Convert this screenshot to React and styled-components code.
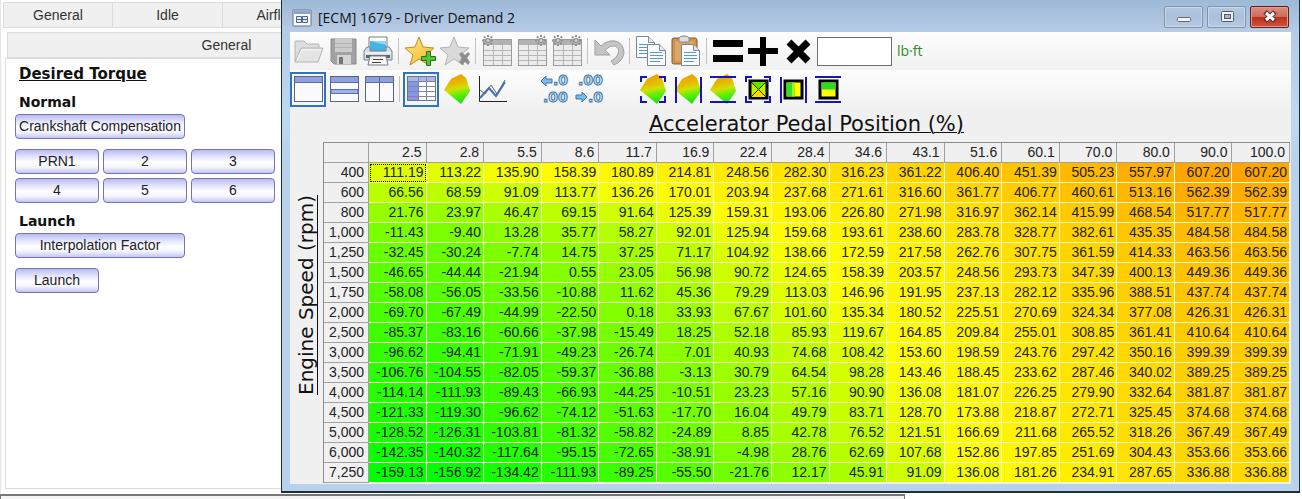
import styled, { createGlobalStyle } from 'styled-components'

const GlobalStyle = createGlobalStyle`
  * {
    box-sizing: border-box;
  }
  body {
    margin: 0;
    background: #ffffff;
    font-family: 'Liberation Sans', Arial, sans-serif;
    font-size: 14px;
    color: #222222;
    overflow: hidden;
  }
`

const pedal = ['2.5', '2.8', '5.5', '8.6', '11.7', '16.9', '22.4', '28.4', '34.6', '43.1', '51.6', '60.1', '70.0', '80.0', '90.0', '100.0']

const rows = [
  ['400', '111.19 113.22 135.90 158.39 180.89 214.81 248.56 282.30 316.23 361.22 406.40 451.39 505.23 557.97 607.20 607.20'],
  ['600', '66.56 68.59 91.09 113.77 136.26 170.01 203.94 237.68 271.61 316.60 361.77 406.77 460.61 513.16 562.39 562.39'],
  ['800', '21.76 23.97 46.47 69.15 91.64 125.39 159.31 193.06 226.80 271.98 316.97 362.14 415.99 468.54 517.77 517.77'],
  ['1,000', '-11.43 -9.40 13.28 35.77 58.27 92.01 125.94 159.68 193.61 238.60 283.78 328.77 382.61 435.35 484.58 484.58'],
  ['1,250', '-32.45 -30.24 -7.74 14.75 37.25 71.17 104.92 138.66 172.59 217.58 262.76 307.75 361.59 414.33 463.56 463.56'],
  ['1,500', '-46.65 -44.44 -21.94 0.55 23.05 56.98 90.72 124.65 158.39 203.57 248.56 293.73 347.39 400.13 449.36 449.36'],
  ['1,750', '-58.08 -56.05 -33.56 -10.88 11.62 45.36 79.29 113.03 146.96 191.95 237.13 282.12 335.96 388.51 437.74 437.74'],
  ['2,000', '-69.70 -67.49 -44.99 -22.50 0.18 33.93 67.67 101.60 135.34 180.52 225.51 270.69 324.34 377.08 426.31 426.31'],
  ['2,500', '-85.37 -83.16 -60.66 -37.98 -15.49 18.25 52.18 85.93 119.67 164.85 209.84 255.01 308.85 361.41 410.64 410.64'],
  ['3,000', '-96.62 -94.41 -71.91 -49.23 -26.74 7.01 40.93 74.68 108.42 153.60 198.59 243.76 297.42 350.16 399.39 399.39'],
  ['3,500', '-106.76 -104.55 -82.05 -59.37 -36.88 -3.13 30.79 64.54 98.28 143.46 188.45 233.62 287.46 340.02 389.25 389.25'],
  ['4,000', '-114.14 -111.93 -89.43 -66.93 -44.25 -10.51 23.23 57.16 90.90 136.08 181.07 226.25 279.90 332.64 381.87 381.87'],
  ['4,500', '-121.33 -119.30 -96.62 -74.12 -51.63 -17.70 16.04 49.79 83.71 128.70 173.88 218.87 272.71 325.45 374.68 374.68'],
  ['5,000', '-128.52 -126.31 -103.81 -81.32 -58.82 -24.89 8.85 42.78 76.52 121.51 166.69 211.68 265.52 318.26 367.49 367.49'],
  ['6,000', '-142.35 -140.32 -117.64 -95.15 -72.65 -38.91 -4.98 28.76 62.69 107.68 152.86 197.85 251.69 304.43 353.66 353.66'],
  ['7,250', '-159.13 -156.92 -134.42 -111.93 -89.25 -55.50 -21.76 12.17 45.91 91.09 136.08 181.26 234.91 287.65 336.88 336.88'],
].map(([rpm, values]) => ({ rpm, values: values.split(' ') }))

const MIN = -159.13
const MID = 150
const MAX = 607.2

// green -> yellow -> orange
function heat(value) {
  const v = Number(value)
  if (v < MID) {
    return `rgb(${Math.round((255 * (v - MIN)) / (MID - MIN))}, 255, 0)`
  }
  return `rgb(255, ${Math.round(255 - (90 * (v - MID)) / (MAX - MID))}, 0)`
}

/* ---------- layout ---------- */

const Screen = styled.div`
  display: flex;
  flex-direction: column;
`

const Workspace = styled.div`
  display: flex;
  align-items: stretch;
`

const Sidebar = styled.aside`
  display: flex;
  flex-direction: column;
  flex: 0 0 281px;
  min-width: 0;
  overflow: hidden;
  padding: 2px 0 4px 2px;
  border-left: 1px solid #e4e4e4;
  background: #fdfdfd;
`

const TabRow = styled.div`
  display: flex;
  padding-left: ${(p) => p.$indent || 0}px;
  margin-bottom: ${(p) => p.$gap || 0}px;
`

const Tab = styled.button`
  flex: 0 0 ${(p) => p.$width}px;
  height: 26px;
  padding: 0;
  border: 1px solid #dcdcdc;
  border-right-width: 0;
  background: #f0f0f0;
  font: inherit;
  color: #333333;
`

const TabPage = styled.div`
  display: flex;
  flex-direction: column;
  flex: 1;
  gap: 8px;
  margin-left: 2px;
  padding: 5px 6px 0 9px;
  border: 1px solid #dcdcdc;
  border-right: 0;
  background: #ffffff;
`

const PanelTitle = styled.h2`
  margin: 0 0 0 4px;
  font: bold 15px/20px 'DejaVu Sans', sans-serif;
  text-decoration: underline;
  color: #111111;
`

const Section = styled.section`
  display: flex;
  flex-direction: column;
  align-items: flex-start;
  gap: 10px;
`

const SectionTitle = styled.h3`
  margin: 0 0 -8px 4px;
  font: bold 14px/20px 'DejaVu Sans', sans-serif;
  color: #111111;
`

const ButtonGrid = styled.div`
  display: grid;
  grid-template-columns: repeat(3, 84px);
  gap: 4px;
`

const PushButton = styled.button`
  width: ${(p) => (p.$wide ? 170 : 84)}px;
  height: 25px;
  padding: 0;
  border: 1px solid #7476ac;
  border-radius: 4px;
  background: linear-gradient(#b9bbf2 0%, #e4e5fc 30%, #ffffff 55%, #f4f4ff 75%, #c3c5f4 100%);
  font: inherit;
  line-height: 23px;
  white-space: nowrap;
  color: #222222;
`

const Window = styled.main`
  display: flex;
  flex-direction: column;
  flex: 1;
  min-width: 0;
  margin-right: 2px;
  padding: 0 8px 7px;
  border: solid #1f2f38;
  border-width: 0 1px 2px 1px;
  background: linear-gradient(#9db9d6 0, #b6cbe6 32px, #bdd9f2 120px, #b9d1ea 160px);
`

const TitleBar = styled.header`
  display: flex;
  align-items: center;
  gap: 6px;
  height: 32px;
  padding: 4px 2px 0;
`

const WindowTitle = styled.h1`
  flex: 1;
  margin: 0;
  font: 14px/24px 'Open Sans', 'Noto Sans', sans-serif;
  color: #111111;
`

const WindowControls = styled.div`
  display: flex;
  gap: 4px;
  margin-bottom: 2px;
`

const ControlButton = styled.button`
  display: flex;
  align-items: center;
  justify-content: center;
  width: 39px;
  height: 22px;
  padding: 0;
  border: 1px solid ${(p) => (p.$danger ? '#5b1f1f' : '#7f93ad')};
  border-radius: 2px;
  box-shadow: inset 0 0 0 1px ${(p) => (p.$danger ? '#e59a8d' : '#c8d8ea')};
  background: ${(p) =>
    p.$danger ? 'linear-gradient(#dd8e81 0%, #cf6a5c 48%, #bd2f1c 52%, #d0543c 100%)' : 'linear-gradient(#b4c8df, #a9bfda 50%, #b7cbe4)'};
`

const Client = styled.div`
  display: flex;
  flex-direction: column;
  background: #f0f0f0;
`

const Toolbar = styled.div`
  display: flex;
  align-items: center;
  height: 38px;
  background: linear-gradient(#fdfdfd, #f1f1f1);
`

const ToolButton = styled.button`
  display: flex;
  align-items: center;
  justify-content: center;
  flex: 0 0 35px;
  height: 35px;
  padding: 0;
  border: ${(p) => (p.$active ? '2px solid #2f74b8' : '0')};
  background: ${(p) => (p.$active ? '#f3f7fb' : 'transparent')};

  svg {
    flex: none;
  }
`

const Divider = styled.span`
  flex: 0 0 1px;
  height: 26px;
  margin: 0 3px;
  background: #c3c3c3;
`

const Spacer = styled.span`
  flex: 0 0 28px;
`

const ValueInput = styled.input`
  width: 75px;
  height: 29px;
  margin-left: 2px;
  padding: 0 4px;
  border: 1px solid #6e6e6e;
  border-radius: 0;
  background: #ffffff;
  font: inherit;
`

const Unit = styled.label`
  margin-left: 5px;
  font: 14px/20px 'Open Sans', 'Noto Sans', sans-serif;
  color: #2c8a2c;
`

const Sheet = styled.div`
  display: grid;
  grid-template-columns: 33px minmax(0, 1fr);
  grid-template-rows: 34px auto;
  padding: 0 1px 1px 0;
`

const XLabel = styled.h2`
  margin: 0;
  font: 21px/32px 'DejaVu Sans', sans-serif;
  text-align: center;
  text-decoration: underline;
  text-decoration-thickness: 1px;
  color: #111111;
`

const YLabel = styled.h2`
  grid-row: 1 / 3;
  margin: 0;
  writing-mode: vertical-rl;
  transform: rotate(180deg);
  font: 20px/33px 'DejaVu Sans', sans-serif;
  text-align: center;
  text-decoration: underline;
  text-decoration-thickness: 1px;
  color: #111111;
`

const DataTable = styled.table`
  grid-column: 2;
  width: 100%;
  table-layout: fixed;
  border-spacing: 0;
  border-top: 1px solid #8c8c8c;
  border-left: 1px solid #8c8c8c;
  line-height: 19px;
  text-align: right;
`

const HeadCell = styled.th`
  width: ${(p) => (p.$corner ? '45px' : 'auto')};
  height: 20px;
  padding: 0 4px 0 0;
  border: solid #a0a0a0;
  border-width: 0 1px 1px 0;
  background: #f0f0f0;
  font-weight: normal;
  text-align: right;
`

const Cell = styled.td`
  height: 20px;
  padding: 0 2px 0 0;
  border: solid #f6f6d8;
  border-width: 0 1px 1px 0;
  background-clip: padding-box;
  outline: ${(p) => (p.$selected ? '1px dotted #000000' : 'none')};
  outline-offset: -2px;
`

const StatusStrip = styled.footer`
  width: 905px;
  height: 5px;
  margin-top: 1px;
  border: solid #777777;
  border-width: 2px 1px 0 1px;
  background: #f4f4f4;
`

/* ---------- icons ---------- */

const Svg = ({ children, size = 32 }) => (
  <svg width={size} height={size} viewBox={`0 0 ${size} ${size}`} fill="none" aria-hidden="true">
    {children}
  </svg>
)

const AppIcon = () => (
  <Svg size={20}>
    <rect x="1" y="2" width="18" height="16" rx="1" fill="#f8f8f8" stroke="#69727e" />
    <rect x="2" y="3" width="16" height="3" fill="#7fa6dc" />
    <path d="M4.5 8.500h5v3h-5zM10.500 8.500h5v3h-5zM4.500 11.500h5v3h-5zM10.500 11.500h5v3h-5z" fill="#dfe8f3" stroke="#50647e" />
  </Svg>
)

const OpenIcon = () => (
  <Svg>
    <path d="M3 27V7q0-1 1-1h8l3 3h11q1 0 1 1v4" fill="#dedede" stroke="#b4b4b4" />
    <path d="M3 27 9 13h22l-5 14z" fill="#e4e4e4" stroke="#b4b4b4" />
    <path d="m5 25 5-10h19" stroke="#f8f8f8" />
  </Svg>
)

const SaveIcon = () => (
  <Svg>
    <path d="M4 4h25v25H7l-3-3z" fill="#a2a2a2" stroke="#8a8a8a" />
    <rect x="8" y="4" width="17" height="13" fill="#cbcbcb" />
    <path d="M8 8.500h17M8 12.500h17" stroke="#b2b2b2" />
    <rect x="10" y="20" width="14" height="9" fill="#d5d5d5" />
    <rect x="12" y="22" width="4" height="7" fill="#777777" />
  </Svg>
)

const PrintIcon = () => (
  <Svg>
    <path d="M7 2h18v13H7z" fill="#ffffff" stroke="#7c7c7c" />
    <path d="M8 6h16v10H8z" fill="#45b3e6" />
    <path d="M8 6h16v4z" fill="#8fd6f5" />
    <path d="M5 12h3v4h16v-4h3l3 4v9H2v-9z" fill="#d9dde2" stroke="#77808a" />
    <path d="M3 18h26" stroke="#ffffff" />
    <rect x="4" y="20" width="24" height="3" fill="#566575" />
    <path d="M8 21h16l2 9H6z" fill="#f8f8f8" stroke="#7c7c7c" />
    <path d="M11 24.500h10M10 27.500h9" stroke="#444444" />
  </Svg>
)

const Star = ({ fill, stroke }) => (
  <path d="m15 2 4 10 11 1-8.500 7 3 10L15 24l-9 6 3-10L1 13l10-1z" fill={fill} stroke={stroke} strokeLinejoin="round" />
)

const StarAddIcon = () => (
  <Svg>
    <defs>
      <linearGradient id="gold" x1="0" y1="0" x2="1" y2="1">
        <stop offset="0" stopColor="#ffe98a" />
        <stop offset="1" stopColor="#f7b423" />
      </linearGradient>
    </defs>
    <Star fill="url(#gold)" stroke="#c48b20" />
    <path d="M22.500 16.500h4v5h5v4h-5v5h-4v-5h-5v-4h5z" fill="#55c436" stroke="#23721b" />
  </Svg>
)

const StarRemoveIcon = () => (
  <Svg>
    <Star fill="#d9d9d9" stroke="#b4b4b4" />
    <path d="m20 19 3-2 3 3 3-3 2 2-3 4 3 4-2 3-3-3-3 3-3-3 3-4z" fill="#8e8e8e" />
  </Svg>
)

const Burst = ({ x }) => (
  <g stroke="#8f8f8f" strokeWidth="2">
    <path d={`M${x} 0v11M${x - 6} 5.500h12M${x - 4} 1.500l8 8M${x + 4} 1.500l-8 8`} strokeDasharray="2 1" />
    <circle cx={x} cy="5.500" r="2" fill="#d0d0d0" strokeWidth="1" />
  </g>
)

const GridBurstIcon = ({ bursts }) => (
  <Svg>
    <rect x="2.500" y="4.500" width="28" height="26" fill="#ececec" stroke="#9c9c9c" />
    <rect x="3" y="5" width="27" height="5" fill="#b2b2b2" />
    <path d="M3 15.500h27M3 20.500h27M3 25.500h27M12.500 10v20M21.500 10v20" stroke="#b6b6b6" />
    {bursts.map((x) => (
      <Burst key={x} x={x} />
    ))}
  </Svg>
)

const UndoIcon = () => (
  <Svg>
    <path
      d="M2 5v15h15l-5-5q5-5 10-4 5 2 3 8-2 5-7 7l3 4q9-4 10-12 0-10-9-12-8-1-14 5z"
      fill="#c5c5c5"
      stroke="#a0a0a0"
      strokeLinejoin="round"
    />
  </Svg>
)

const PaperShape = ({ x, y }) => (
  <g transform={`translate(${x} ${y})`}>
    <path d="M.5.500h12l6 6v15H.5z" fill="#fafcff" stroke="#7a8796" />
    <path d="M12.500.500v6h6" fill="#e3e9f0" stroke="#7a8796" />
    <path d="M3 8.500h12M3 11.500h13M3 14.500h13M3 17.500h10" stroke="#5796d8" />
  </g>
)

const CopyIcon = () => (
  <Svg>
    <PaperShape x={1} y={1} />
    <PaperShape x={12} y={9} />
  </Svg>
)

const PasteIcon = () => (
  <Svg>
    <rect x="2" y="3" width="25" height="26" rx="2" fill="#cf9350" stroke="#8a5a26" />
    <rect x="5" y="6" width="19" height="20" fill="#dca867" />
    <path d="M9 3q0-2 5-2t5 2v4H9z" fill="#dedede" stroke="#868686" />
    <PaperShape x={11} y={9} />
  </Svg>
)

const EqualsIcon = () => (
  <Svg>
    <path d="M1 5h30v7H1zM1 20h30v7H1z" fill="#000000" />
  </Svg>
)

const PlusIcon = () => (
  <Svg>
    <path d="M13 2h6v11h12v6H19v12h-6V19H1v-6h12z" fill="#000000" />
  </Svg>
)

const TimesIcon = () => (
  <Svg>
    <path d="m7 7 19 19M26 7 7 26" stroke="#000000" strokeWidth="7" />
  </Svg>
)

const LayoutIcon = ({ split }) => (
  <Svg>
    <rect x="2.500" y="3.500" width="28" height="25" fill="#fbfbfd" stroke="#5a6580" />
    <path d="M3 4h27v5H3z" fill="#8f9fe0" />
    <path d="M3 9.500h27" stroke="#5a6fae" />
    {split === 'rows' && <path d="M3 16.500h27v4H3z" fill="#9fb0ea" stroke="#5a6fae" />}
    {split === 'columns' && <path d="M16.500 4v24" stroke="#5a6580" />}
  </Svg>
)

const TableIcon = () => (
  <Svg>
    <rect x="2.500" y="3.500" width="28" height="24" fill="#ffffff" stroke="#68738c" />
    <path d="M3 4h27v4H3z" fill="#a9b5ee" />
    <path d="M3 8h10v19H3z" fill="#8795e2" />
    <path d="M3 8.500h27M3 13.500h27M3 18.500h27M3 23.500h27M13.500 4v24M21.500 4v24" stroke="#7d86a6" />
  </Svg>
)

const SurfaceDefs = () => (
  <defs>
    <linearGradient id="surface" x1=".4" y1="0" x2=".6" y2="1">
      <stop offset="0" stopColor="#ec9a00" />
      <stop offset=".3" stopColor="#e8b800" />
      <stop offset=".5" stopColor="#cfe000" />
      <stop offset=".7" stopColor="#5cf000" />
      <stop offset="1" stopColor="#1fdc1f" />
    </linearGradient>
  </defs>
)

const SURFACE = 'M3 17 10 6 20 1l5 4 4 13-9 13z'

const SurfaceIcon = () => (
  <Svg>
    <SurfaceDefs />
    <path d={SURFACE} fill="url(#surface)" />
  </Svg>
)

const ChartIcon = () => (
  <Svg>
    <path d="M3.500 3v25.500H31" stroke="#222222" />
    <path d="m4 25 9-10 7 8 9-14" stroke="#3c74bd" strokeWidth="2" />
    <path d="m4 17 5 4 6-9 6 9 8-14" stroke="#5b6572" />
  </Svg>
)

const decimalText = {
  fill: '#c6e2f6',
  stroke: '#3d78a8',
  strokeWidth: 1,
  fontFamily: "'DejaVu Sans', sans-serif",
  fontWeight: 'bold',
  fontSize: 14,
}

const DecimalIcon = ({ more }) => (
  <Svg>
    {more ? (
      <>
        <path d="m2 8 5-5v3h6v4H7v3z" fill="#7cbbe8" stroke="#3d78a8" />
        <text x="14" y="12" {...decimalText}>.0</text>
        <text x="4" y="29" {...decimalText}>.00</text>
      </>
    ) : (
      <>
        <text x="4" y="12" {...decimalText}>.00</text>
        <path d="m13 24-5-5v3H2v4h6v3z" fill="#7cbbe8" stroke="#3d78a8" />
        <text x="14" y="29" {...decimalText}>.0</text>
      </>
    )}
  </Svg>
)

const brackets = {
  corners: 'M4 9V4h6M22 4h6v5M28 23v6h-6M10 29H4v-6',
  sides: 'M4 4v26M29 4v26',
  bars: 'M3 4h26M3 29h26',
}

const RangeIcon = ({ bracket, kind }) => (
  <Svg>
    {kind === 'surface' && <path d={SURFACE} fill="url(#surface)" />}
    {kind === 'cross' && (
      <>
        <rect x="8" y="8" width="17" height="17" fill="#c5f000" stroke="#000000" strokeWidth="3" />
        <path d="M9 9h15L16.500 16.500z" fill="#62e600" />
        <path d="M9 24h15L16.500 16.500z" fill="#ffd800" />
        <path d="m9 9 15 15M24 9 9 24" stroke="#222222" />
      </>
    )}
    {kind === 'across' && (
      <>
        <rect x="8" y="8" width="17" height="17" fill="#ffff00" stroke="#000000" strokeWidth="3" />
        <path d="M9.500 9.500h6v14h-6z" fill="#35e02a" />
        <path d="M15 9.500h3v14h-3z" fill="#a8f010" />
      </>
    )}
    {kind === 'down' && (
      <>
        <rect x="8" y="8" width="17" height="17" fill="#ffff00" stroke="#000000" strokeWidth="3" />
        <path d="M9.500 9.500h14v7h-14z" fill="#2bd92b" />
      </>
    )}
    <path d={brackets[bracket]} stroke="#1515bb" strokeWidth="2" />
  </Svg>
)

const MinimizeIcon = () => (
  <Svg size={16}>
    <rect x="1.500" y="8.500" width="13" height="4" rx="1" fill="#f4f4f4" stroke="#5b6877" />
  </Svg>
)

const MaximizeIcon = () => (
  <Svg size={16}>
    <rect x="2.500" y="2.500" width="12" height="10" rx="1" fill="#f4f4f4" stroke="#4d5b6c" />
    <rect x="5.500" y="5.500" width="6" height="4" fill="#9fb6d2" stroke="#4d5b6c" />
  </Svg>
)

const CloseIcon = () => (
  <Svg size={16}>
    <path d="m3 3 10 9M13 3 3 12" stroke="#5d3038" strokeWidth="5" />
    <path d="m4 4 8 7M12 4l-8 7" stroke="#ffffff" strokeWidth="3" />
  </Svg>
)

/* ---------- page ---------- */

const Tool = ({ label, active, children }) => (
  <ToolButton type="button" aria-label={label} $active={active}>
    {children}
  </ToolButton>
)

function TorquePanel() {
  return (
    <Sidebar>
      <TabRow $gap={4}>
        <Tab $width={109}>General</Tab>
        <Tab $width={110}>Idle</Tab>
        <Tab $width={110}>Airflow</Tab>
      </TabRow>
      <TabRow $indent={4}>
        <Tab $width={438}>General</Tab>
      </TabRow>
      <TabPage>
        <PanelTitle>Desired Torque</PanelTitle>
        <Section>
          <SectionTitle>Normal</SectionTitle>
          <PushButton $wide>Crankshaft Compensation</PushButton>
          <ButtonGrid>
            {['PRN1', '2', '3', '4', '5', '6'].map((name) => (
              <PushButton key={name}>{name}</PushButton>
            ))}
          </ButtonGrid>
        </Section>
        <Section>
          <SectionTitle>Launch</SectionTitle>
          <PushButton $wide>Interpolation Factor</PushButton>
          <PushButton>Launch</PushButton>
        </Section>
      </TabPage>
    </Sidebar>
  )
}

function EditToolbar() {
  return (
    <Toolbar>
      <Tool label="Open"><OpenIcon /></Tool>
      <Tool label="Save"><SaveIcon /></Tool>
      <Tool label="Print"><PrintIcon /></Tool>
      <Divider />
      <Tool label="Add favorite"><StarAddIcon /></Tool>
      <Tool label="Remove favorite"><StarRemoveIcon /></Tool>
      <Divider />
      <Tool label="Column labels"><GridBurstIcon bursts={[7]} /></Tool>
      <Tool label="Row labels"><GridBurstIcon bursts={[25]} /></Tool>
      <Tool label="Both labels"><GridBurstIcon bursts={[7, 25]} /></Tool>
      <Divider />
      <Tool label="Undo"><UndoIcon /></Tool>
      <Divider />
      <Tool label="Copy"><CopyIcon /></Tool>
      <Tool label="Paste"><PasteIcon /></Tool>
      <Divider />
      <Tool label="Set value"><EqualsIcon /></Tool>
      <Tool label="Add value"><PlusIcon /></Tool>
      <Tool label="Multiply value"><TimesIcon /></Tool>
      <ValueInput id="value" type="text" />
      <Unit htmlFor="value">lb·ft</Unit>
    </Toolbar>
  )
}

function ViewToolbar() {
  return (
    <Toolbar>
      <Tool label="Single view" active><LayoutIcon /></Tool>
      <Tool label="Split rows"><LayoutIcon split="rows" /></Tool>
      <Tool label="Split columns"><LayoutIcon split="columns" /></Tool>
      <Divider />
      <Tool label="Table" active><TableIcon /></Tool>
      <Tool label="Surface"><SurfaceIcon /></Tool>
      <Tool label="Chart"><ChartIcon /></Tool>
      <Spacer />
      <Tool label="More decimals"><DecimalIcon more /></Tool>
      <Tool label="Fewer decimals"><DecimalIcon /></Tool>
      <Spacer />
      <Tool label="Smooth all"><RangeIcon kind="surface" bracket="corners" /></Tool>
      <Tool label="Smooth across"><RangeIcon kind="surface" bracket="sides" /></Tool>
      <Tool label="Smooth down"><RangeIcon kind="surface" bracket="bars" /></Tool>
      <Tool label="Interpolate all"><RangeIcon kind="cross" bracket="corners" /></Tool>
      <Tool label="Interpolate across"><RangeIcon kind="across" bracket="sides" /></Tool>
      <Tool label="Interpolate down"><RangeIcon kind="down" bracket="bars" /></Tool>
    </Toolbar>
  )
}

function TorqueTable() {
  return (
    <DataTable>
      <thead>
        <tr>
          <HeadCell as="td" $corner />
          {pedal.map((p) => (
            <HeadCell key={p} scope="col">{p}</HeadCell>
          ))}
        </tr>
      </thead>
      <tbody>
        {rows.map(({ rpm, values }, r) => (
          <tr key={rpm}>
            <HeadCell scope="row">{rpm}</HeadCell>
            {values.map((value, c) => (
              <Cell key={c} $selected={r === 0 && c === 0} style={{ backgroundColor: heat(value) }}>
                {value}
              </Cell>
            ))}
          </tr>
        ))}
      </tbody>
    </DataTable>
  )
}

export default function App() {
  return (
    <Screen>
      <GlobalStyle />
      <Workspace>
        <TorquePanel />
        <Window>
          <TitleBar>
            <AppIcon />
            <WindowTitle>[ECM] 1679 - Driver Demand 2</WindowTitle>
            <WindowControls>
              <ControlButton aria-label="Minimize"><MinimizeIcon /></ControlButton>
              <ControlButton aria-label="Maximize"><MaximizeIcon /></ControlButton>
              <ControlButton aria-label="Close" $danger><CloseIcon /></ControlButton>
            </WindowControls>
          </TitleBar>
          <Client>
            <EditToolbar />
            <ViewToolbar />
            <Sheet>
              <YLabel>Engine Speed (rpm)</YLabel>
              <XLabel>Accelerator Pedal Position (%)</XLabel>
              <TorqueTable />
            </Sheet>
          </Client>
        </Window>
      </Workspace>
      <StatusStrip />
    </Screen>
  )
}
